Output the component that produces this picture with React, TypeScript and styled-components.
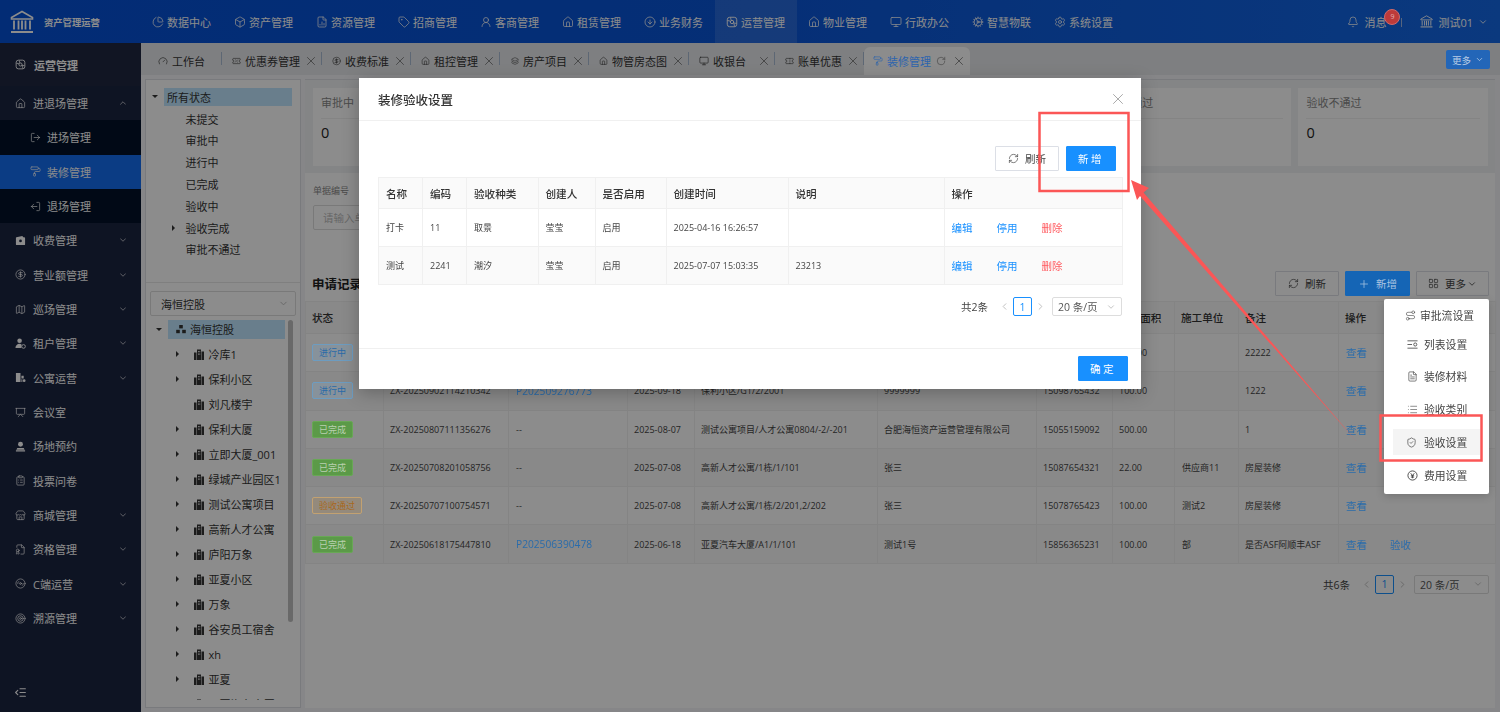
import React from "react";
import styled, { createGlobalStyle } from "styled-components";
import {
  Bell, Box, ChartPie, ChevronDown, ChevronLeft, ChevronRight, ChevronUp, CircleArrowDown,
  CircleDollarSign, ClipboardList, Cog, Disc3, FileBadge, FileChartColumn, FileText, Gauge, House, IndentDecrease,
  Layers, LayoutGrid, List, LogOut, Map as MapIcon, Monitor, PaintRoller, Plus, Presentation,
  RefreshCw, Route, RotateCw, Settings, ShieldCheck, Store, Tag, Target, Ticket, TicketPercent, UserRound,
  X,
} from "lucide-react";

const FONT = `"Open Sans", "Noto Sans CJK SC", sans-serif`;

const Global = createGlobalStyle`
  html, body { margin: 0; padding: 0; height: 100%; overflow: hidden; background: #fff; }
  * { box-sizing: border-box; }
  body { font-family: ${FONT}; color: #333; }
`;

const Page = styled.div`
  width: 1500px;
  height: 712px;
  display: flex;
  flex-direction: column;
  overflow: hidden;
  background: #fff;
`;

/* ---------- icons drawn by hand ---------- */
const BankLogo = ({ size = 24 }: { size?: number }) => (
  <svg width={size} height={size} viewBox="0 0 24 24" fill="none" stroke="currentColor" strokeWidth="1.6">
    <path d="M12 1.5 1.5 7.5v1.5h21V7.5z" />
    <path d="M4 10.5v9M8.5 10.5v9M12 10.5v9M15.5 10.5v9M20 10.5v9" strokeWidth="1.8" />
    <path d="M1 22h22" strokeWidth="2" />
  </svg>
);
const OpsIcon = ({ size = 12 }: { size?: number }) => (
  <svg width={size} height={size} viewBox="0 0 24 24" fill="none" stroke="currentColor" strokeWidth="1.9">
    <rect x="2.5" y="2.5" width="19" height="19" rx="5" />
    <circle cx="12" cy="12" r="3.4" />
    <path d="M3 9c3 .5 5 1 6 2M15 13c1 2 1.500 4 2 8M9 3c.5 3 1 5 2 6M21 15c-3-.5-5-1-6-2" />
  </svg>
);
const YenIcon = ({ size = 12 }: { size?: number }) => (
  <svg width={size} height={size} viewBox="0 0 24 24" fill="none" stroke="currentColor" strokeWidth="2">
    <circle cx="12" cy="12" r="10" />
    <path d="m8 7 4 5 4-5M12 12v6M8.500 12.500h7M8.500 15.500h7" />
  </svg>
);
const FeeIcon = ({ size = 11 }: { size?: number }) => (
  <svg width={size} height={size} viewBox="0 0 12 12" fill="currentColor">
    <path fillRule="evenodd" d="M1.500 2.500 8 1l1 1.500h1a1 1 0 0 1 1 1V10a1 1 0 0 1-1 1H2a1 1 0 0 1-1-1V3zM6 5a1.500 1.500 0 1 0 0 3 1.500 1.500 0 0 0 0-3z" />
  </svg>
);
const TenantIcon = ({ size = 11 }: { size?: number }) => (
  <svg width={size} height={size} viewBox="0 0 12 12" fill="currentColor">
    <circle cx="5" cy="3" r="2.500" />
    <path d="M.5 11c0-3 2-4.800 4.500-4.800.8 0 1.500.2 2 .5V11z" />
    <circle cx="9.300" cy="9.200" r="2" fill="none" stroke="currentColor" strokeWidth="1" />
  </svg>
);
const ApartmentIcon = ({ size = 11 }: { size?: number }) => (
  <svg width={size} height={size} viewBox="0 0 12 12" fill="currentColor">
    <path d="M1 1h5v10H1zM7 4h2.500v3.200H7zM7 8h1v3H7z" />
    <circle cx="10" cy="9.500" r="1.500" />
  </svg>
);
const BookingIcon = ({ size = 11 }: { size?: number }) => (
  <svg width={size} height={size} viewBox="0 0 12 12" fill="currentColor">
    <circle cx="6" cy="3.500" r="2.700" />
    <path d="M2.500 7.500h7l1 2H1.500zM1 10.200h10V11.500H1z" />
  </svg>
);
const ListSetIcon = ({ size = 11 }: { size?: number }) => (
  <svg width={size} height={size} viewBox="0 0 12 12" fill="none" stroke="currentColor" strokeWidth=".9">
    <path d="M.5 2h11M.5 6h5M.5 10h11" />
    <circle cx="9" cy="6" r="1.700" />
  </svg>
);
const OrgIcon = () => (
  <svg width="10" height="10" viewBox="0 0 10 10" fill="currentColor">
    <rect x="3.2" y="1" width="3.6" height="3.4" />
    <rect x=".2" y="5.800" width="3.6" height="3.400" />
    <rect x="6.200" y="5.800" width="3.600" height="3.400" />
  </svg>
);
const BuildingIcon = () => (
  <svg width="10" height="11" viewBox="0 0 10 11" fill="currentColor">
    <path d="M3 .5h4v10.500H3zM0 3.500h2.500V11H0zM7.500 2.500H10V11H7.500z" />
    <path d="M4 2h.8v1.200H4zM5.400 2h.8v1.200h-.8zM4 4.500h.8v1.200H4zM5.400 4.500h.8v1.200h-.8z" fill="#fff" />
  </svg>
);

/* ---------- header ---------- */
const Header = styled.header`
  height: 43px;
  flex: none;
  display: flex;
  align-items: stretch;
  background: linear-gradient(90deg, #0550d6, #0a56d8 50%, #1468e6);
  color: #fff;
`;
const Brand = styled.div`
  width: 141px;
  flex: none;
  display: flex;
  align-items: center;
  gap: 10px;
  padding-left: 10px;
  font-size: 9.3px;
  font-weight: 700;
  white-space: nowrap;
`;
const NavItem = styled.div<{ $active?: boolean }>`
  width: 82px;
  display: flex;
  align-items: center;
  gap: 3px;
  padding-left: 11px;
  font-size: 11px;
  white-space: nowrap;
  background: ${(p) => (p.$active ? "rgba(255,255,255,.12)" : "transparent")};
`;
const HeaderRight = styled.div`
  margin-left: auto;
  display: flex;
  align-items: center;
  font-size: 11px;
  padding-right: 12px;
`;
const Notice = styled.div`
  position: relative;
  display: flex;
  align-items: center;
  gap: 5px;
  padding-right: 16px;
  margin-right: 18px;
  &::after {
    content: "";
    position: absolute;
    right: 0;
    top: 4px;
    height: 9px;
    width: 1px;
    background: #9db8e8;
  }
`;
const Badge = styled.span`
  position: absolute;
  z-index: 2;
  left: 37px;
  top: -5px;
  width: 16px;
  height: 16px;
  border-radius: 50%;
  background: #bd3a3a;
  border: 1px solid #cf6a6a;
  color: #e6b0b0;
  font-size: 7px;
  line-height: 14px;
  text-align: center;
`;
const UserBox = styled.div`
  display: flex;
  align-items: center;
  gap: 5px;
`;

/* ---------- sidebar ---------- */
const Body = styled.div`
  flex: 1;
  display: flex;
  min-height: 0;
`;
const Sidebar = styled.aside`
  width: 141px;
  flex: none;
  display: flex;
  flex-direction: column;
  background: #1b2541;
  color: #fff;
`;
const SideTitle = styled.div`
  height: 43px;
  flex: none;
  display: flex;
  align-items: center;
  gap: 8px;
  padding-left: 15px;
  font-size: 11px;
  font-weight: 700;
  background: #1f2740;
`;
const SideRow = styled.div<{ $child?: boolean; $active?: boolean }>`
  height: 34.33px;
  flex: none;
  display: flex;
  align-items: center;
  gap: ${(p) => (p.$child ? "6px" : "7px")};
  padding-left: ${(p) => (p.$child ? "30px" : "15px")};
  padding-right: 13px;
  font-size: 11px;
  white-space: nowrap;
  background: ${(p) => (p.$active ? "#146df0" : p.$child ? "#021228" : "transparent")};
`;
const SideChevron = styled.span`
  margin-left: auto;
  display: flex;
  opacity: 0.75;
`;
const SideFoot = styled.div`
  margin-top: auto;
  height: 40px;
  padding-left: 14px;
  display: flex;
  align-items: center;
`;

/* ---------- tabs ---------- */
const Content = styled.div`
  flex: 1;
  min-width: 0;
  display: flex;
  flex-direction: column;
  background: #f4f5f7;
`;
const TabBar = styled.div`
  height: 32px;
  flex: none;
  display: flex;
  align-items: stretch;
  position: relative;
  padding-top: 4px;
  background: #e6e8eb;
`;
const TabItem = styled.div<{ $w: number; $active?: boolean; $pl?: number }>`
  width: ${(p) => p.$w}px;
  flex: none;
  position: relative;
  z-index: ${(p) => (p.$active ? 2 : "auto")};
  display: flex;
  align-items: center;
  gap: 4px;
  padding-left: ${(p) => p.$pl ?? 10}px;
  padding-right: 6px;
  font-size: 11px;
  white-space: nowrap;
  color: ${(p) => (p.$active ? "#2c64ae" : "#333")};
  background: ${(p) => (p.$active ? "#8c8c8c" : "transparent")};
  border-radius: ${(p) => (p.$active ? "6px 6px 0 0" : "0")};
  &::after {
    content: "";
    display: ${(p) => (p.$active ? "none" : "block")};
    position: absolute;
    right: 0;
    top: 5px;
    height: 13px;
    width: 1px;
    background: #a9bcd3;
  }
`;
const TabClose = styled.span<{ $active?: boolean }>`
  margin-left: auto;
  margin-right: -2px;
  display: flex;
  color: ${(p) => (p.$active ? "#3a3a3a" : "#666")};
`;
const MoreTab = styled.div`
  position: absolute;
  z-index: 2;
  right: 10px;
  top: 7px;
  width: 44px;
  height: 19px;
  border-radius: 2px;
  background: #2366b8;
  color: #b8cde6;
  font-size: 9.500px;
  display: flex;
  align-items: center;
  justify-content: center;
  gap: 4px;
`;

/* ---------- workspace ---------- */
const Workspace = styled.div`
  flex: 1;
  min-height: 0;
  display: flex;
  gap: 4px;
  padding: 4px 5px 4px 4px;
`;
const TreePanel = styled.div`
  width: 156px;
  flex: none;
  border: 1px solid #dcdfe4;
  background: #fff;
  display: flex;
  flex-direction: column;
`;
const StateTree = styled.div`
  height: 203px;
  flex: none;
  padding-top: 6px;
  border-bottom: 1px solid #e8e8e8;
`;
const TreeRow = styled.div<{ $indent: number; $h?: number }>`
  height: ${(p) => p.$h ?? 21.8}px;
  display: flex;
  align-items: center;
  padding-left: ${(p) => p.$indent}px;
  font-size: 11px;
  white-space: nowrap;
`;
const RootRow = styled(TreeRow)`
  margin-bottom: 3px;
`;
const Caret = styled.span<{ $open?: boolean; $hide?: boolean }>`
  width: 0;
  height: 0;
  flex: none;
  visibility: ${(p) => (p.$hide ? "hidden" : "visible")};
  border-style: solid;
  border-color: transparent;
  ${(p) =>
    p.$open
      ? "border-width: 3.5px 3px 0 3px; border-top-color: #333; margin-right: 6px;"
      : "border-width: 3px 0 3px 3.5px; border-left-color: #333; margin-right: 10.5px; margin-left: 1px;"}
`;
const Highlight = styled.span<{ $w: number }>`
  width: ${(p) => p.$w}px;
  height: 18.500px;
  display: flex;
  align-items: center;
  gap: 4px;
  padding-left: ${(p) => (p.$w > 120 ? 3 : 8)}px;
  background: #bfe6ff;
`;
const TreeSelect = styled.div`
  margin: 8px 4px 4px;
  height: 25px;
  flex: none;
  border: 1px solid #ddd;
  border-radius: 2px;
  display: flex;
  align-items: center;
  justify-content: space-between;
  padding: 0 6px 0 10px;
  font-size: 11px;
`;
const OrgTree = styled.div`
  position: relative;
  height: 380px;
  overflow: hidden;
  flex: none;
`;
const ScrollThumb = styled.div`
  position: absolute;
  right: 7px;
  top: 0;
  width: 5px;
  height: 302px;
  border-radius: 3px;
  background: #c0c0c0;
`;
const NodeLabel = styled.span`
  display: flex;
  align-items: center;
  gap: 5px;
  margin-left: 4px;
`;

const Main = styled.main`
  flex: 1;
  min-width: 0;
  background: #fff;
  border-top: 1px solid #dcdfe4;
  display: flex;
  flex-direction: column;
`;
const StatsBand = styled.div`
  height: 93px;
  flex: none;
  display: flex;
  gap: 7.500px;
  padding: 8px 7px 7px 8px;
  background: #f0f2f4;
`;
const StatCard = styled.div`
  flex: 1;
  background: #fff;
  padding: 0 8px;
`;
const StatTitle = styled.div`
  height: 31px;
  padding-bottom: 2px;
  display: flex;
  align-items: center;
  font-size: 11px;
  color: #888;
  border-bottom: 1px solid #f0f0f0;
`;
const StatValue = styled.div`
  font-size: 14.500px;
  line-height: 27px;
  color: #222;
`;
const Filter = styled.div`
  height: 98px;
  flex: none;
  padding: 12px 8px 0;
`;
const FilterLabel = styled.div`
  font-size: 9px;
  line-height: 12px;
  color: #888;
`;
const FilterInput = styled.div`
  margin-top: 8px;
  width: 150px;
  height: 25px;
  border: 1px solid #ddd;
  border-radius: 2px;
  padding-left: 9px;
  display: flex;
  align-items: center;
  font-size: 10.500px;
  color: #bbb;
`;
const TableHead = styled.div`
  height: 25px;
  flex: none;
  display: flex;
  align-items: center;
  gap: 6px;
  padding: 0 6px 0 7px;
  margin-bottom: 5px;
`;
const SectionTitle = styled.h3`
  margin: 0 auto 0 0;
  font-size: 12.500px;
  font-weight: 700;
  color: #222;
`;
const Btn = styled.button<{ $primary?: boolean; $w: number; $spaced?: boolean }>`
  width: ${(p) => p.$w}px;
  height: 25px;
  flex: none;
  display: flex;
  align-items: center;
  justify-content: center;
  gap: 6px;
  padding: 0;
  font-family: ${FONT};
  font-size: 10.500px;
  letter-spacing: ${(p) => (p.$spaced ? "2.500px" : "0")};
  color: ${(p) => (p.$primary ? "#fff" : "#444")};
  background: ${(p) => (p.$primary ? "#1890ff" : "#fff")};
  border: 1px solid ${(p) => (p.$primary ? "#1890ff" : "#dcdfe6")};
  border-radius: 1px;
`;
const BlueBtn = styled(Btn)`
  position: relative;
  z-index: 2;
  background: #1565b5;
  border-color: #1565b5;
  color: #a9c4e2;
`;

const Grid = styled.table`
  width: 100%;
  table-layout: fixed;
  border-collapse: collapse;
  flex: none;
`;
const Th = styled.th<{ $h: number; $px?: number }>`
  height: ${(p) => p.$h}px;
  padding: 0 ${(p) => p.$px ?? 7}px;
  text-align: left;
  font-size: 10.600px;
  font-weight: 500;
  color: #333;
  background: #fafafa;
  border: 1px solid #f0f0f0;
  white-space: nowrap;
  overflow: hidden;
`;
const Td = styled.td<{ $h: number; $px?: number }>`
  height: ${(p) => p.$h}px;
  padding: 0 ${(p) => p.$px ?? 7}px;
  font-size: 9px;
  color: #444;
  border: 1px solid #f0f0f0;
  white-space: nowrap;
  overflow: hidden;
`;
const Tr = styled.tr<{ $even?: boolean }>`
  background: ${(p) => (p.$even ? "#fafafa" : "#fff")};
`;
const tagColors = {
  run: { border: "#6d9cc0", bg: "#87929b", fg: "#2a6aa8" },
  done: { border: "#68a855", bg: "#5b9a48", fg: "#b9d0b0" },
  pass: { border: "#c2a171", bg: "#948a7c", fg: "#a8681c" },
};
const StatusTag = styled.span<{ $kind: "run" | "done" | "pass" }>`
  position: relative;
  z-index: 2;
  display: inline-block;
  height: 17px;
  line-height: 15px;
  padding: 0 6px;
  font-size: 9px;
  border-radius: 2px;
  border: 1px solid ${(p) => tagColors[p.$kind].border};
  background: ${(p) => tagColors[p.$kind].bg};
  color: ${(p) => tagColors[p.$kind].fg};
`;
const TextLink = styled.a<{ $danger?: boolean; $size?: number; $gap?: number }>`
  color: ${(p) => (p.$danger ? "#ff5a5f" : "#1890ff")};
  font-size: ${(p) => p.$size ?? 10.500}px;
  margin-right: ${(p) => p.$gap ?? 0}px;
`;
const LiftedLink = styled(TextLink)`
  position: relative;
  z-index: 2;
  color: #2a6cab;
`;
const Pager = styled.div<{ $pr: number; $mt: number }>`
  display: flex;
  align-items: center;
  justify-content: flex-end;
  padding-right: ${(p) => p.$pr}px;
  margin-top: ${(p) => p.$mt}px;
  font-size: 10.500px;
  color: #444;
`;
const PagerArrow = styled.span`
  display: flex;
  color: #bbb;
`;
const PageBox = styled.span`
  width: 19px;
  height: 19px;
  border: 1px solid #1890ff;
  border-radius: 2px;
  color: #1890ff;
  display: flex;
  align-items: center;
  justify-content: center;
  margin: 0 3px;
  font-weight: 500;
`;
const PagerSelect = styled.span<{ $w: number }>`
  width: ${(p) => p.$w}px;
  height: 19px;
  border: 1px solid #ddd;
  border-radius: 2px;
  margin-left: 6px;
  padding: 0 5px;
  display: flex;
  align-items: center;
  justify-content: space-between;
  color: #555;
`;
const PagerTotal = styled.span`
  margin-right: 11px;
`;

/* ---------- overlay layers ---------- */
const Mask = styled.div`
  position: fixed;
  inset: 0;
  z-index: 1;
  background: rgba(0, 0, 0, 0.45);
`;
const ModalLayer = styled.div`
  position: fixed;
  inset: 0;
  z-index: 3;
  display: flex;
  justify-content: center;
  padding-top: 78px;
  pointer-events: none;
`;
const Modal = styled.div`
  width: 782px;
  height: 311px;
  background: #fff;
  display: flex;
  flex-direction: column;
  box-shadow: 0 4px 16px rgba(0, 0, 0, 0.25);
`;
const ModalHeader = styled.div`
  height: 43px;
  flex: none;
  display: flex;
  align-items: center;
  justify-content: space-between;
  padding: 0 14px 0 19px;
  border-bottom: 1px solid #f0f0f0;
`;
const ModalTitle = styled.div`
  font-size: 12.500px;
  font-weight: 500;
  color: #333;
`;
const ModalBody = styled.div`
  flex: 1;
  padding: 25px 19px 0;
`;
const ModalTools = styled.div`
  display: flex;
  justify-content: flex-end;
  gap: 7px;
  padding-right: 6px;
  margin-bottom: 6px;
`;
const ModalFooter = styled.div`
  height: 41px;
  flex: none;
  display: flex;
  align-items: flex-start;
  justify-content: flex-end;
  padding: 7px 13px 0 0;
  border-top: 1px solid #f0f0f0;
`;
const Menu = styled.div`
  position: absolute;
  z-index: 3;
  left: 1384px;
  top: 299px;
  width: 105px;
  height: 195px;
  background: #fff;
  border-radius: 2px;
  box-shadow: 0 2px 8px rgba(0, 0, 0, 0.18);
  font-size: 10.800px;
  color: #444;
`;
const MenuRow = styled.div<{ $h: number; $pl: number }>`
  height: ${(p) => p.$h}px;
  display: flex;
  align-items: center;
  gap: ${(p) => (p.$pl < 22 ? 4 : 6)}px;
  padding-left: ${(p) => p.$pl}px;
`;
const MenuActive = styled.div`
  height: 38px;
  padding: 6px 9px;
`;
const MenuPill = styled.div`
  height: 26px;
  display: flex;
  align-items: center;
  gap: 7px;
  padding-left: 13px;
  background: #f4f4f4;
`;
const Annotation = styled.svg`
  position: absolute;
  z-index: 4;
  left: 0;
  top: 0;
  pointer-events: none;
`;

/* ---------- data ---------- */
const navs: [React.ElementType, string][] = [
  [ChartPie, "数据中心"], [Box, "资产管理"], [FileChartColumn, "资源管理"], [Tag, "招商管理"],
  [UserRound, "客商管理"], [House, "租赁管理"], [CircleArrowDown, "业务财务"], [OpsIcon, "运营管理"],
  [House, "物业管理"], [Monitor, "行政办公"], [Cog, "智慧物联"], [Settings, "系统设置"],
];
const sideRows: { icon: React.ElementType; label: string; chevron?: boolean }[] = [
  { icon: FeeIcon, label: "收费管理", chevron: true },
  { icon: CircleDollarSign, label: "营业额管理", chevron: true },
  { icon: MapIcon, label: "巡场管理", chevron: true },
  { icon: TenantIcon, label: "租户管理", chevron: true },
  { icon: ApartmentIcon, label: "公寓运营", chevron: true },
  { icon: Presentation, label: "会议室" },
  { icon: BookingIcon, label: "场地预约" },
  { icon: ClipboardList, label: "投票问卷" },
  { icon: Store, label: "商城管理", chevron: true },
  { icon: FileBadge, label: "资格管理", chevron: true },
  { icon: Disc3, label: "C端运营", chevron: true },
  { icon: Target, label: "溯源管理", chevron: true },
];
const tabs: [React.ElementType, string, number, number][] = [
  [TicketPercent, "优惠券管理", 100, 10],
  [CircleDollarSign, "收费标准", 89, 10],
  [House, "租控管理", 89, 10],
  [Layers, "房产项目", 89, 11],
  [House, "物管房态图", 100, 10],
  [Monitor, "收银台", 86, 10],
  [Ticket, "账单优惠", 89, 10],
];
const stats = ["审批中", "进行中", "已完成", "验收中", "验收通过", "验收不通过"];
const statusTree: [string, boolean][] = [
  ["未提交", false], ["审批中", false], ["进行中", false], ["已完成", false],
  ["验收中", false], ["验收完成", true], ["审批不通过", false],
];
const orgNodes: [string, boolean][] = [
  ["冷库1", true], ["保利小区", true], ["刘凡楼宇", false], ["保利大厦", true], ["立即大厦_001", true],
  ["绿城产业园区1", true], ["测试公寓项目", true], ["高新人才公寓", true], ["庐阳万象", true], ["亚夏小区", true],
  ["万象", true], ["谷安员工宿舍", true], ["xh", true], ["亚夏", true], ["亚夏汽车大厦", true],
];
type Row = { tag: "run" | "done" | "pass"; label: string; no: string; p: string; d: string; room: string; name: string; tel: string; area: string; co: string; note: string; check?: boolean };
const rows: Row[] = [
  { tag: "run", label: "进行中", no: "ZX-20250903101525118", p: "P202509276801", d: "2025-09-20", room: "保利小区/G1/2/2002", name: "9999999", tel: "15098765431", area: "100.00", co: "", note: "22222" },
  { tag: "run", label: "进行中", no: "ZX-20250902114210342", p: "P202509276773", d: "2025-09-18", room: "保利小区/G1/2/2001", name: "9999999", tel: "15098765432", area: "100.00", co: "", note: "1222" },
  { tag: "done", label: "已完成", no: "ZX-20250807111356276", p: "--", d: "2025-08-07", room: "测试公寓项目/人才公寓0804/-2/-201", name: "合肥海恒资产运营管理有限公司", tel: "15055159092", area: "500.00", co: "", note: "1" },
  { tag: "done", label: "已完成", no: "ZX-20250708201058756", p: "--", d: "2025-07-08", room: "高新人才公寓/1栋/1/101", name: "张三", tel: "15087654321", area: "22.00", co: "供应商11", note: "房屋装修" },
  { tag: "pass", label: "验收通过", no: "ZX-20250707100754571", p: "--", d: "2025-07-08", room: "高新人才公寓/1栋/2/201,2/202", name: "张三", tel: "15078765423", area: "100.00", co: "测试2", note: "房屋装修" },
  { tag: "done", label: "已完成", no: "ZX-20250618175447810", p: "P202506390478", d: "2025-06-18", room: "亚夏汽车大厦/A1/1/101", name: "测试1号", tel: "15856365231", area: "100.00", co: "部", note: "是否ASF阿顺丰ASF", check: true },
];
const mainCols = [78, 125, 119, 67, 183, 159, 76, 62, 64, 100, 157];
const mainHeads = ["状态", "单据编号", "项目编号", "申请日期", "房屋信息", "申请人", "联系电话", "装修面积", "施工单位", "备注", "操作"];
const modalCols = [44, 44, 71.500, 57, 71, 122, 156, 178.500];
const modalHeads = ["名称", "编码", "验收种类", "创建人", "是否启用", "创建时间", "说明", "操作"];
const modalRows = [
  ["打卡", "11", "取景", "莹莹", "启用", "2025-04-16 16:26:57", ""],
  ["测试", "2241", "潮汐", "莹莹", "启用", "2025-07-07 15:03:35", "23213"],
];

export default function App() {
  return (
    <Page>
      <Global />
      <Header>
        <Brand><BankLogo />资产管理运营</Brand>
        {navs.map(([I, t]) => (
          <NavItem key={t} $active={t === "运营管理"}><I size={12} strokeWidth={1.5} />{t}</NavItem>
        ))}
        <HeaderRight>
          <Notice><Bell size={12} strokeWidth={1.5} />消息<Badge>9</Badge></Notice>
          <UserBox><BankLogo size={13} />测试01<ChevronDown size={10} /></UserBox>
        </HeaderRight>
      </Header>
      <Body>
        <Sidebar>
          <SideTitle><OpsIcon size={11} />运营管理</SideTitle>
          <SideRow><House size={11} strokeWidth={1.5} />进退场管理<SideChevron><ChevronUp size={10} /></SideChevron></SideRow>
          <SideRow $child><LogOut size={11} strokeWidth={1.5} />进场管理</SideRow>
          <SideRow $child $active><PaintRoller size={11} strokeWidth={1.5} />装修管理</SideRow>
          <SideRow $child><LogOut size={11} strokeWidth={1.5} style={{ transform: "scaleX(-1)" }} />退场管理</SideRow>
          {sideRows.map(({ icon: I, label, chevron }) => (
            <SideRow key={label}>
              <I size={11} strokeWidth={1.5} />{label}
              {chevron && <SideChevron><ChevronDown size={10} /></SideChevron>}
            </SideRow>
          ))}
          <SideFoot><IndentDecrease size={13} /></SideFoot>
        </Sidebar>
        <Content>
          <TabBar>
            <TabItem $w={81} $pl={17}><Gauge size={10} strokeWidth={1.5} />工作台</TabItem>
            {tabs.map(([I, t, w, pl]) => (
              <TabItem key={t} $w={w} $pl={pl}><I size={10} strokeWidth={1.5} />{t}<TabClose><X size={14} strokeWidth={1.3} /></TabClose></TabItem>
            ))}
            <TabItem $w={106} $pl={9} $active>
              <PaintRoller size={10} strokeWidth={1.5} />装修管理
              <RotateCw size={10} strokeWidth={1.5} style={{ marginLeft: 1, color: "#444" }} />
              <TabClose $active><X size={14} strokeWidth={1.3} /></TabClose>
            </TabItem>
            <MoreTab>更多<ChevronDown size={9} /></MoreTab>
          </TabBar>
          <Workspace>
            <TreePanel>
              <StateTree>
                <TreeRow $indent={6}><Caret $open /><Highlight $w={128}>所有状态</Highlight></TreeRow>
                {statusTree.map(([t, c]) => (
                  <TreeRow key={t} $indent={25}><Caret $hide={!c} />{t}</TreeRow>
                ))}
              </StateTree>
              <TreeSelect>海恒控股<ChevronDown size={11} color="#bbb" /></TreeSelect>
              <OrgTree>
                <RootRow $indent={10} $h={18.5}><Caret $open /><Highlight $w={117}><OrgIcon />海恒控股</Highlight></RootRow>
                {orgNodes.map(([t, c]) => (
                  <TreeRow key={t} $indent={29} $h={25}>
                    <Caret $hide={!c} />
                    <NodeLabel><BuildingIcon />{t}</NodeLabel>
                  </TreeRow>
                ))}
                <ScrollThumb />
              </OrgTree>
            </TreePanel>
            <Main>
              <StatsBand>
                {stats.map((s) => (
                  <StatCard key={s}><StatTitle>{s}</StatTitle><StatValue>0</StatValue></StatCard>
                ))}
              </StatsBand>
              <Filter>
                <FilterLabel>单据编号</FilterLabel>
                <FilterInput>请输入单据编号</FilterInput>
              </Filter>
              <TableHead>
                <SectionTitle>申请记录</SectionTitle>
                <Btn $w={64}><RefreshCw size={11} strokeWidth={1.5} />刷新</Btn>
                <BlueBtn $primary $w={65}><Plus size={12} strokeWidth={1.5} />新增</BlueBtn>
                <Btn $w={73}><LayoutGrid size={11} strokeWidth={1.5} />更多<ChevronDown size={10} style={{ marginLeft: -5 }} /></Btn>
              </TableHead>
              <Grid>
                <colgroup>{mainCols.map((w, i) => <col key={i} width={w} />)}</colgroup>
                <thead>
                  <tr>{mainHeads.map((h) => <Th key={h} $h={32} $px={6}>{h}</Th>)}</tr>
                </thead>
                <tbody>
                  {rows.map((r, i) => (
                    <Tr key={r.no} $even={i % 2 === 1}>
                      <Td $h={38.3} $px={6}><StatusTag $kind={r.tag}>{r.label}</StatusTag></Td>
                      <Td $h={38.3} $px={6}>{r.no}</Td>
                      <Td $h={38.3} $px={7}>{r.p === "--" ? r.p : <LiftedLink $size={10.2}>{r.p}</LiftedLink>}</Td>
                      <Td $h={38.3} $px={6}>{r.d}</Td>
                      <Td $h={38.3} $px={6}>{r.room}</Td>
                      <Td $h={38.3} $px={6}>{r.name}</Td>
                      <Td $h={38.3} $px={6}>{r.tel}</Td>
                      <Td $h={38.3} $px={6}>{r.area}</Td>
                      <Td $h={38.3} $px={7}>{r.co}</Td>
                      <Td $h={38.3} $px={6}>{r.note}</Td>
                      <Td $h={38.3} $px={7}>
                        <LiftedLink $gap={r.check ? 23 : 0}>查看</LiftedLink>
                        {r.check && <LiftedLink>验收</LiftedLink>}
                      </Td>
                    </Tr>
                  ))}
                </tbody>
              </Grid>
              <Pager $pr={6} $mt={11}>
                <PagerTotal>共6条</PagerTotal>
                <PagerArrow><ChevronLeft size={11} /></PagerArrow>
                <PageBox>1</PageBox>
                <PagerArrow><ChevronRight size={11} /></PagerArrow>
                <PagerSelect $w={75}>20 条/页<ChevronDown size={10} color="#bbb" /></PagerSelect>
              </Pager>
            </Main>
          </Workspace>
        </Content>
      </Body>
      <Mask />
      <ModalLayer>
        <Modal>
          <ModalHeader>
            <ModalTitle>装修验收设置</ModalTitle>
            <X size={18} color="#999" strokeWidth={1.1} />
          </ModalHeader>
          <ModalBody>
            <ModalTools>
              <Btn $w={64}><RefreshCw size={11} strokeWidth={1.5} />刷新</Btn>
              <Btn $primary $spaced $w={50}>新增</Btn>
            </ModalTools>
            <Grid>
              <colgroup>{modalCols.map((w, i) => <col key={i} width={w} />)}</colgroup>
              <thead>
                <tr>{modalHeads.map((h) => <Th key={h} $h={31}>{h}</Th>)}</tr>
              </thead>
              <tbody>
                {modalRows.map((r, i) => (
                  <Tr key={r[0]} $even={i === 1}>
                    {r.map((c, j) => <Td key={j} $h={38}>{c}</Td>)}
                    <Td $h={38}>
                      <TextLink $gap={24}>编辑</TextLink>
                      <TextLink $gap={24}>停用</TextLink>
                      <TextLink $danger>删除</TextLink>
                    </Td>
                  </Tr>
                ))}
              </tbody>
            </Grid>
            <Pager $pr={0} $mt={12}>
              <PagerTotal>共2条</PagerTotal>
              <PagerArrow><ChevronLeft size={11} /></PagerArrow>
              <PageBox>1</PageBox>
              <PagerArrow><ChevronRight size={11} /></PagerArrow>
              <PagerSelect $w={70}>20 条/页<ChevronDown size={10} color="#bbb" /></PagerSelect>
            </Pager>
          </ModalBody>
          <ModalFooter>
            <Btn $primary $spaced $w={50}>确定</Btn>
          </ModalFooter>
        </Modal>
      </ModalLayer>
      <Menu>
        <MenuRow $h={32} $pl={21}><Route size={11} strokeWidth={1.3} />审批流设置</MenuRow>
        <MenuRow $h={26} $pl={23}><ListSetIcon size={11} />列表设置</MenuRow>
        <MenuRow $h={38} $pl={23}><FileText size={11} strokeWidth={1.5} />装修材料</MenuRow>
        <MenuRow $h={28} $pl={23}><List size={11} strokeWidth={1.3} />验收类别</MenuRow>
        <MenuActive><MenuPill><ShieldCheck size={11} strokeWidth={1.5} />验收设置</MenuPill></MenuActive>
        <MenuRow $h={28} $pl={23}><YenIcon size={11} />费用设置</MenuRow>
      </Menu>
      <Annotation width="1500" height="712" viewBox="0 0 1500 712">
        <rect x="1039.500" y="113" width="89" height="78" fill="none" stroke="#fb5656" strokeWidth="2.500" />
        <rect x="1380.500" y="415.500" width="101" height="45" fill="none" stroke="#fb5656" strokeWidth="2.500" />
        <path d="M1131 180 1149 188 1143.500 192.500 1357 442 1140 196 1137 200Z" fill="#fb5656" />
      </Annotation>
    </Page>
  );
}
